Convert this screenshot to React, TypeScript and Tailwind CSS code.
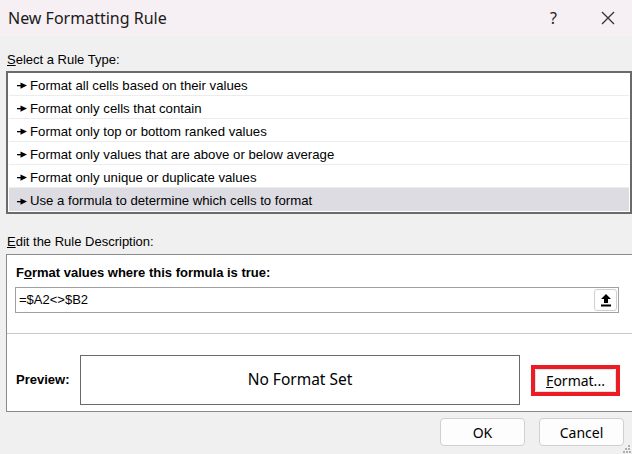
import React from "react";

const rules = [
  "Format all cells based on their values",
  "Format only cells that contain",
  "Format only top or bottom ranked values",
  "Format only values that are above or below average",
  "Format only unique or duplicate values",
  "Use a formula to determine which cells to format",
];

function Pointer() {
  return (
    <svg width="10" height="7" viewBox="0 0 10 7" className="shrink-0">
      <rect x="0" y="3" width="5" height="1.3" fill="#000" />
      <polygon points="3.5,0.5 10,3.6 3.5,6.7" fill="#000" />
    </svg>
  );
}

export default function App() {
  return (
    <div
      className="relative flex h-[454px] w-[632px] flex-col overflow-hidden bg-[#f0f0f0] text-black"
      style={{ fontFamily: "Tahoma, 'Liberation Sans', Arial, sans-serif" }}
    >
      {/* title bar */}
      <div className="flex h-[36px] shrink-0 items-center bg-[#f6eff3] pl-[8px]">
        <span className="text-[16px] text-[#1a1a1a]" style={{ fontFamily: "'Segoe UI', 'Noto Sans', sans-serif" }}>
          New Formatting Rule
        </span>
        <span className="ml-auto mr-[44px] text-[16px] text-[#222]" style={{ fontFamily: "'Noto Sans', sans-serif" }}>
          ?
        </span>
        <svg width="14" height="14" viewBox="0 0 14 14" className="mr-[17px]">
          <path d="M1 1 L13 13 M13 1 L1 13" stroke="#333" strokeWidth="1.3" fill="none" />
        </svg>
      </div>

      <div className="mt-[16px] h-[16px] pl-[7px] text-[13px] leading-[16px]">
        <span className="underline">S</span>elect a Rule Type:
      </div>

      {/* rule list */}
      <div className="ml-[6px] mt-[3px] w-[626px] border-2 border-[#6a6a6a] bg-white pb-[1px]">
        {rules.map((r, i) => (
          <div
            key={r}
            className={`mx-[1px] flex h-[23px] items-center gap-[3px] pl-[8px] pt-[3px] text-[13.2px] ${
              i === rules.length - 1 ? "bg-[#dddce3]" : "border-b border-[#ececec]"
            }`}
          >
            <Pointer />
            <span>{r}</span>
          </div>
        ))}
      </div>

      <div className="mt-[20px] h-[16px] pl-[7px] text-[13px] leading-[16px]">
        <span className="underline">E</span>dit the Rule Description:
      </div>

      {/* description panel */}
      <div className="ml-[6px] mt-[4px] flex h-[158px] w-[626px] flex-col border border-r-0 border-[#8a8a8a] bg-white">
        <div className="mt-[10px] h-[16px] pl-[9px] text-[13px] font-bold leading-[16px]">
          F<span className="underline">o</span>rmat values where this formula is true:
        </div>
        <div className="ml-[8px] mt-[6px] flex h-[26px] w-[604px] items-center border border-[#a0a0a0] pl-[3px] text-[13px]">
          <span>=$A2&lt;&gt;$B2</span>
          <button className="ml-auto mr-[1px] flex h-[22px] w-[23px] items-center justify-center rounded-[3px] border border-[#cfcfcf] bg-white">
            <svg width="12" height="14" viewBox="0 0 12 14">
              <polygon points="6,1 11,6 8,6 8,10 4,10 4,6 1,6" fill="#000" />
              <rect x="1" y="11.5" width="10" height="2" fill="#000" />
            </svg>
          </button>
        </div>
        <div className="mt-[20px] h-px w-full bg-[#c8c8c8]" />
        <div className="mt-[21px] flex items-center">
          <span className="w-[73px] pl-[9px] text-[13px] font-bold">Preview:</span>
          <div
            className="flex h-[50px] w-[440px] items-center justify-center border border-[#6a6a6a] text-[15.5px]"
            style={{ fontFamily: "'Segoe UI', 'Noto Sans', sans-serif" }}
          >
            No Format Set
          </div>
          <div className="ml-[11px] flex h-[31px] w-[89px] items-center justify-center border-[4px] border-[#ec1c24]">
            <button
              className="flex h-[23px] w-[81px] items-center justify-center rounded-[2px] border border-[#e0e0e0] bg-[#fdfdfd] text-[14px]"
              style={{ fontFamily: "'Segoe UI', 'Noto Sans', sans-serif" }}
            >
              <span className="underline">F</span>ormat...
            </button>
          </div>
        </div>
      </div>

      {/* buttons */}
      <div
        className="mt-[6px] flex justify-end gap-[14px] pr-[8px] text-[14px]"
        style={{ fontFamily: "'Segoe UI', 'Noto Sans', sans-serif" }}
      >
        <button className="h-[28px] w-[85px] rounded-[4px] border border-[#d0d0d0] bg-[#fdfdfd]">OK</button>
        <button className="h-[28px] w-[85px] rounded-[4px] border border-[#d0d0d0] bg-[#fdfdfd]">Cancel</button>
      </div>

      {/* resize grip */}
      <svg width="8" height="8" viewBox="0 0 8 8" className="absolute bottom-[1px] right-[1px]">
        <rect x="5" y="0" width="2" height="2" fill="#b0b0b0" />
        <rect x="2" y="3" width="2" height="2" fill="#b0b0b0" />
        <rect x="5" y="3" width="2" height="2" fill="#b0b0b0" />
        <rect x="0" y="6" width="2" height="2" fill="#b0b0b0" />
        <rect x="3" y="6" width="2" height="2" fill="#b0b0b0" />
        <rect x="6" y="6" width="2" height="2" fill="#b0b0b0" />
      </svg>
    </div>
  );
}
